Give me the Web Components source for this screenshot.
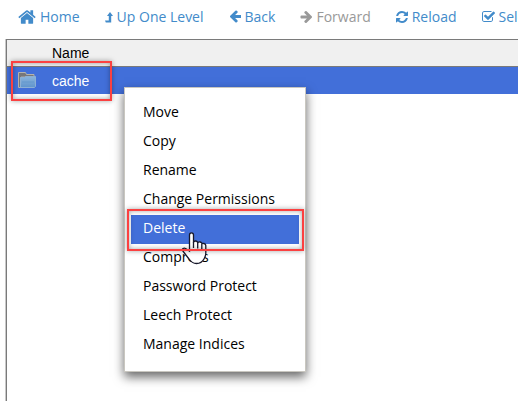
<!DOCTYPE html>
<html lang="en">
<head>
<meta charset="utf-8">
<title>File Manager</title>
<style>
html, body{
    margin: 0;
    height: 100%;
}
body{
    background: #fff;
    font: 14px/20px "Open Sans", sans-serif;
    color: #000;
    overflow: hidden;
}
</style>
</head>
<body>

<file-manager>
    <tool-bar slot="tools">
        <tool-button icon="home">Home</tool-button>
        <tool-button icon="up">Up One Level</tool-button>
        <tool-button icon="back">Back</tool-button>
        <tool-button icon="forward" disabled>Forward</tool-button>
        <tool-button icon="reload">Reload</tool-button>
        <tool-button icon="check">Select All</tool-button>
    </tool-bar>
    <file-table name="cache"></file-table>
    <context-menu slot="overlay">
        <menu-entry>Move</menu-entry>
        <menu-entry>Copy</menu-entry>
        <menu-entry>Rename</menu-entry>
        <menu-entry>Change Permissions</menu-entry>
        <menu-entry active>Delete</menu-entry>
        <menu-entry>Compress</menu-entry>
        <menu-entry>Password Protect</menu-entry>
        <menu-entry>Leech Protect</menu-entry>
        <menu-entry>Manage Indices</menu-entry>
    </context-menu>
</file-manager>

<script>
// one entry per toolbar icon: drawn width, height, viewBox and path
var ICONS = {
    home: [18, 14, "50 256 1692 1280", "M1472 992v480q0 26-19 45t-45 19h-384v-384h-256v384h-384q-26 0-45-19t-19-45v-480q0-1 .5-3t.5-3l575-474 575 474q1 2 1 6zm223-69l-62 74q-8 9-21 11h-3q-13 0-21-7l-692-577-692 577q-12 8-24 7-13-2-21-11l-62-74q-8-10-7-23.5t11-21.5l719-599q32-26 76-26t76 26l244 204v-195q0-14 9-23t23-9h192q14 0 23 9t9 23v408l219 182q10 8 11 21.5t-7 23.5z"],
    up: [8, 11, "0 0 8 11", "M5 0L8 4H6.200V10.500H.8L0 8.500H3.800V4H2z"],
    back: [12, 14, "64 128 1536 1792", "M1664 896v128q0 53-32.5 90.5t-84.5 37.5h-704l293 294q38 36 38 90t-38 90l-75 76q-37 37-90 37-52 0-91-37l-651-652q-37-37-37-90 0-52 37-91l651-650q38-38 91-38 52 0 90 38l75 74q38 38 38 91t-38 91l-293 293h704q52 0 84.5 37.5t32.5 90.5z"],
    forward: [12, 14, "64 64 1536 1792", "M1600 960q0 54-37 91l-651 651q-39 37-91 37-51 0-90-37l-75-75q-38-38-38-91t38-91l293-293h-704q-52 0-84.5-37.5t-32.5-90.5v-128q0-53 32.5-90.5t84.5-37.5h704l-293-294q-38-36-38-90t38-90l75-75q38-38 90-38 53 0 91 38l651 651q37 35 37 90z"],
    reload: [12, 14, "128 0 1536 1792", "M1639 1056q0 5-1 7-64 268-268 434.5t-478 166.5q-146 0-282.5-55t-243.5-157l-129 129q-19 19-45 19t-45-19-19-45v-448q0-26 19-45t45-19h448q26 0 45 19t19 45-19 45l-137 137q71 66 161 102t187 36q134 0 250-65t186-179q11-17 53-117 8-23 30-23h192q13 0 22.5 9.5t9.5 22.5zm25-800v448q0 26-19 45t-45 19h-448q-26 0-45-19t-19-45 19-45l138-138q-148-137-349-137-134 0-250 65t-186 179q-11 17-53 117-8 23-30 23h-199q-13 0-22.5-9.5t-9.5-22.5v-7q65-268 270-434.5t480-166.5q146 0 284 55.5t245 156.5l130-129q19-19 45-19t45 19 19 45z"],
    check: [13, 14, "64 0 1664 1792", "M1472 930v318q0 119-84.5 203.5t-203.5 84.5h-832q-119 0-203.5-84.5t-84.5-203.5v-832q0-119 84.5-203.5t203.5-84.5h832q63 0 117 25 15 7 18 23 3 17-9 29l-49 49q-10 10-23 10-3 0-9-2-23-6-45-6h-832q-66 0-113 47t-47 113v832q0 66 47 113t113 47h832q66 0 113-47t47-113v-254q0-13 9-22l64-64q10-10 23-10 6 0 12 3 20 8 20 29zm231-489l-814 814q-24 24-57 24t-57-24l-430-430q-24-24-24-57t24-57l110-110q24-24 57-24t57 24l263 263 647-647q24-24 57-24t57 24l110 110q24 24 24 57t-24 57z"]
};

// page frame: toolbar on top, listing below, menu above both
class FileManager extends HTMLElement {
    constructor(){
        super();
        this.attachShadow({mode:"open"}).innerHTML = `
<style>
:host{
    display: flex;
    flex-direction: column;
    position: relative;
    min-height: 100vh;
    overflow: hidden;
}
main{
    display: flex;
    flex: 1;
    margin-left: 5px;
    border-left: 1px solid #c8c8c8;
}
</style>
<slot name="tools"></slot>
<main><slot></slot></main>
<slot name="overlay"></slot>
`;
    }
}

class ToolBar extends HTMLElement {
    constructor(){
        super();
        this.attachShadow({mode:"open"}).innerHTML = `
<style>
:host{
    display: flex;
    gap: 25px;
    padding: 7px 0 12px 18px;
}
</style>
<slot></slot>
`;
    }
}

class ToolButton extends HTMLElement {
    constructor(){
        super();
        this.attachShadow({mode:"open"});
    }

    connectedCallback(){
        var icon = ICONS[this.getAttribute("icon")];
        this.shadowRoot.innerHTML = `
<style>
:host{
    display: block;
    flex: none;
}
button{
    display: flex;
    align-items: center;
    gap: 4px;
    padding: 0;
    border: 0;
    background: none;
    font: inherit;
    color: #428bca;
    white-space: nowrap;
}
button:disabled{
    color: #999;
}
svg{
    fill: currentColor;
}
</style>
<button type="button" ${this.hasAttribute("disabled") ? "disabled" : ""}>
    <svg width="${icon[0]}" height="${icon[1]}" viewBox="${icon[2]}" aria-hidden="true"><path d="${icon[3]}"/></svg>
    <slot></slot>
</button>
`;
    }
}

class FileTable extends HTMLElement {
    constructor(){
        super();
        this.attachShadow({mode:"open"});
    }

    connectedCallback(){
        this.shadowRoot.innerHTML = `
<style>
:host{
    display: block;
    flex: 1;
    border: solid #7a7a7a;
    border-width: 1px 0 0 1px;
    font-family: "Liberation Sans", Arial, sans-serif;
}
table{
    width: 100%;
    border-collapse: separate;
    border-spacing: 0;
    text-align: left;
}
th, td{
    height: 26px;
    padding: 0;
    font-weight: 400;
}
th{
    background: #f0f0f0;
    border-bottom: 1px solid #7a7a7a;
}
td{
    height: 27px;
    background: #426fd9;
    color: #fff;
}
.icon{
    width: 34px;
    padding-left: 11px;
}
svg{
    display: block;
}
.mark{
    position: relative;
}
call-out{
    inset: -6px auto -7px 4px;
    width: 101px;
}
</style>
<table>
    <thead><tr><th class="icon"></th><th>Name</th></tr></thead>
    <tbody><tr class="mark">
        <td class="icon">
            <svg width="18" height="17" viewBox="0 0 18 17" aria-hidden="true">
                <defs><linearGradient id="front" x2="0" y2="1"><stop stop-color="#8bb4dc"/><stop offset="1" stop-color="#5f94cc"/></linearGradient></defs>
                <path d="M.5 .5V15.500H3V5H16V2.500H8.500L7.500 .5z" fill="#77777a" stroke="#b5b3ad"/>
                <path d="M2.500 15.500V5.500H6.500L7.500 4.500H17.500V14.500L16.500 15.500z" fill="url(#front)" stroke="#8db0d4"/>
                <path d="M4 10H16" stroke="#6598cd"/>
            </svg>
        </td>
        <td>${this.getAttribute("name")}<call-out></call-out></td>
    </tr></tbody>
</table>
`;
    }
}

// red frame that points at something
class CallOut extends HTMLElement {
    constructor(){
        super();
        this.attachShadow({mode:"open"}).innerHTML = `
<style>
:host{
    display: block;
    position: absolute;
    box-sizing: border-box;
    border: 2px solid #fb4141;
    box-shadow: 0 0 5px rgba(0,0,0,.35), inset 0 0 5px rgba(0,0,0,.35);
    pointer-events: none;
}
</style>
`;
    }
}

class ContextMenu extends HTMLElement {
    constructor(){
        super();
        this.attachShadow({mode:"open"}).innerHTML = `
<style>
:host{
    display: block;
    position: absolute;
    left: 124px;
    top: 87px;
    padding: 11px 6px;
    border: 1px solid #c9c7c0;
    background: #fff;
    box-shadow: 0 5px 10px rgba(0,0,0,.6);
}
</style>
<div role="menu"><slot></slot></div>
`;
    }
}

class MenuEntry extends HTMLElement {
    constructor(){
        super();
        this.attachShadow({mode:"open"});
    }

    connectedCallback(){
        this.shadowRoot.innerHTML = `
<style>
:host{
    display: block;
    position: relative;
}
:host([active]){
    z-index: 1;
}
button{
    display: block;
    width: 100%;
    height: 29px;
    padding: 0 24px 3px 12px;
    border: 0;
    background: none;
    font: inherit;
    color: #000;
    text-align: left;
    white-space: nowrap;
}
:host([active]) button{
    background: #426fd9;
    color: #fff;
}
call-out{
    inset: -6px -5px -7px -4px;
}
svg{
    position: absolute;
    left: 50px;
    top: 17px;
}
</style>
<button type="button" role="menuitem"><slot></slot></button>
${this.hasAttribute("active") ? `
<svg width="26" height="33" viewBox="0 0 26 33" aria-hidden="true">
    <path d="M8.500 19V3Q8.500 .8 10.500 .8T12.500 3V10.500Q12.500 9 14.500 9T16.700 11Q17 9.800 19 10T20.800 12Q21 11 23 11.500T24.800 14V21Q24.800 24 23 27Q20.500 31.500 15.500 31.500Q11 31.500 8 27L3 20.500Q.5 17.500 2 16.500Q4 15.500 6 17.500z" fill="#fff" stroke="#17182b" stroke-width="1.300"/>
    <path d="M12.500 10V16M16.700 11V16.500M20.800 12V17" fill="none" stroke="#17182b" stroke-width="1.300"/>
</svg>
<call-out></call-out>` : ""}
`;
    }
}

customElements.define("file-manager", FileManager)
customElements.define("tool-bar", ToolBar)
customElements.define("tool-button", ToolButton)
customElements.define("call-out", CallOut)
customElements.define("file-table", FileTable)
customElements.define("context-menu", ContextMenu)
customElements.define("menu-entry", MenuEntry)
</script>
</body>
</html>
